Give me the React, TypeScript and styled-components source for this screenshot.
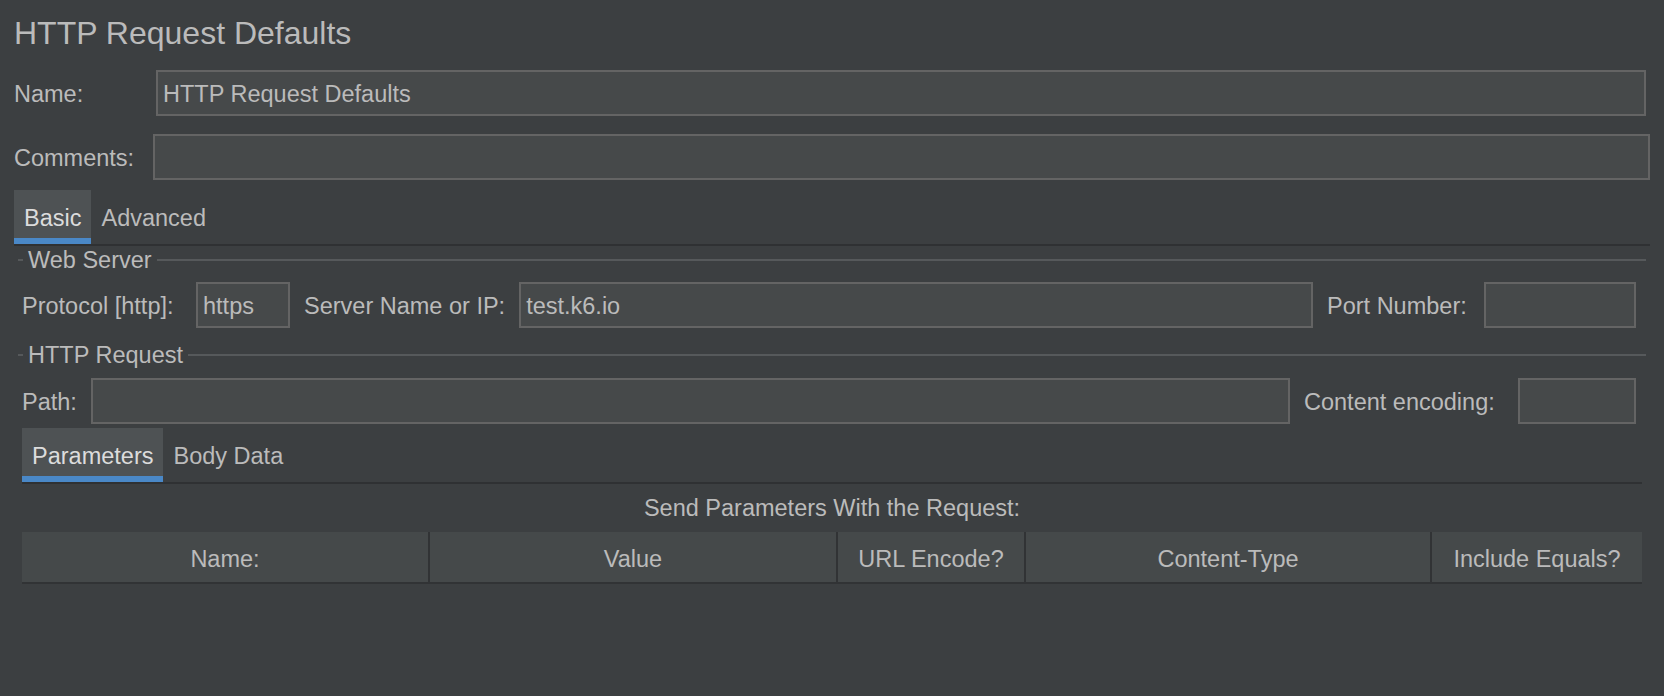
import React from "react";
import styled, { createGlobalStyle } from "styled-components";

const GlobalStyle = createGlobalStyle`
  html, body {
    margin: 0;
    padding: 0;
    background: #3c3f41;
  }
  body {
    font-family: "Liberation Sans", Arial, Helvetica, sans-serif;
  }
`;

const Page = styled.div`
  width: 1664px;
  height: 696px;
  box-sizing: border-box;
  padding: 14px 14px 0 14px;
  background: #3c3f41;
  color: #bbbbbb;
  font-size: 23.5px;
  overflow: hidden;
  display: flex;
  flex-direction: column;
`;

const Title = styled.h1`
  margin: 0;
  font-weight: 400;
  font-size: 32px;
  line-height: 38px;
  color: #bbbbbb;
  white-space: nowrap;
`;

const FormRow = styled.div<{ $top: number; $right: number }>`
  display: flex;
  align-items: center;
  margin-top: ${(p) => p.$top}px;
  margin-right: ${(p) => p.$right}px;
`;

const Label = styled.span<{ $w?: number }>`
  flex: none;
  width: ${(p) => (p.$w ? `${p.$w}px` : "auto")};
  line-height: 28px;
  padding-top: 2px;
  white-space: nowrap;
  color: #bbbbbb;
`;

const Field = styled.div<{ $w?: number }>`
  box-sizing: border-box;
  height: 46px;
  border: 2px solid #646464;
  background: #46494a;
  padding: 2px 5px 0 5px;
  display: flex;
  align-items: center;
  color: #bbbbbb;
  white-space: nowrap;
  overflow: hidden;
  flex: ${(p) => (p.$w ? "none" : "1 1 auto")};
  width: ${(p) => (p.$w ? `${p.$w}px` : "auto")};
  min-width: 0;
`;

const TabStrip = styled.div<{ $top: number; $inset: number }>`
  display: flex;
  margin-top: ${(p) => p.$top}px;
  margin-left: ${(p) => p.$inset}px;
  margin-right: ${(p) => p.$inset}px;
  border-bottom: 2px solid #2f3133;
`;

const Tab = styled.div<{ $active?: boolean }>`
  box-sizing: border-box;
  height: 54px;
  padding: 2px 10px 0 10px;
  display: flex;
  align-items: center;
  white-space: nowrap;
  background: ${(p) => (p.$active ? "#4e5254" : "transparent")};
  box-shadow: ${(p) => (p.$active ? "inset 0 -6px 0 #4a88c7" : "none")};
  color: ${(p) => (p.$active ? "#dcdcdc" : "#bbbbbb")};
`;

const PaneBody = styled.div`
  display: flex;
  flex-direction: column;
  padding: 0 4px;
`;

const GroupTitle = styled.div<{ $top: number }>`
  display: flex;
  align-items: center;
  height: 28px;
  margin-top: ${(p) => p.$top}px;
  &::before {
    content: "";
    flex: none;
    width: 5px;
    height: 2px;
    background: #56595b;
  }
  &::after {
    content: "";
    flex: 1 1 auto;
    height: 2px;
    background: #56595b;
  }
`;

const GroupText = styled.span`
  padding: 0 5px;
  line-height: 28px;
  white-space: nowrap;
  color: #bbbbbb;
`;

const FieldRow = styled.div<{ $top: number }>`
  display: flex;
  align-items: center;
  gap: 14px;
  margin-top: ${(p) => p.$top}px;
  padding: 0 10px 0 4px;
`;

const Caption = styled.div`
  margin: 10px 4px 0 4px;
  line-height: 28px;
  text-align: center;
  color: #bbbbbb;
`;

const Table = styled.div`
  margin: 10px 4px 0 4px;
  display: grid;
  grid-template-columns: 406px 406px 186px 404px 1fr;
  column-gap: 2px;
  padding-bottom: 2px;
  background: #313335;
`;

const HeaderCell = styled.div`
  box-sizing: border-box;
  height: 50px;
  padding-top: 5px;
  display: flex;
  align-items: center;
  justify-content: center;
  background: #45494a;
  color: #bbbbbb;
  white-space: nowrap;
`;

const columns = ["Name:", "Value", "URL Encode?", "Content-Type", "Include Equals?"];

export default function App() {
  return (
    <>
      <GlobalStyle />
      <Page>
        <Title>HTTP Request Defaults</Title>

        <FormRow $top={18} $right={4}>
          <Label $w={142}>Name:</Label>
          <Field>HTTP Request Defaults</Field>
        </FormRow>

        <FormRow $top={18} $right={0}>
          <Label $w={139}>Comments:</Label>
          <Field />
        </FormRow>

        <TabStrip $top={10} $inset={0}>
          <Tab $active>Basic</Tab>
          <Tab>Advanced</Tab>
        </TabStrip>

        <PaneBody>
          <GroupTitle $top={0}>
            <GroupText>Web Server</GroupText>
          </GroupTitle>

          <FieldRow $top={8}>
            <Label $w={160}>Protocol [http]:</Label>
            <Field $w={94}>https</Field>
            <Label>Server Name or IP:</Label>
            <Field>test.k6.io</Field>
            <Label $w={143}>Port Number:</Label>
            <Field $w={152} />
          </FieldRow>

          <GroupTitle $top={13}>
            <GroupText>HTTP Request</GroupText>
          </GroupTitle>

          <FieldRow $top={9}>
            <Label>Path:</Label>
            <Field />
            <Label $w={200}>Content encoding:</Label>
            <Field $w={118} />
          </FieldRow>

          <TabStrip $top={4} $inset={4}>
            <Tab $active>Parameters</Tab>
            <Tab>Body Data</Tab>
          </TabStrip>

          <Caption>Send Parameters With the Request:</Caption>

          <Table>
            {columns.map((c) => (
              <HeaderCell key={c}>{c}</HeaderCell>
            ))}
          </Table>
        </PaneBody>
      </Page>
    </>
  );
}
